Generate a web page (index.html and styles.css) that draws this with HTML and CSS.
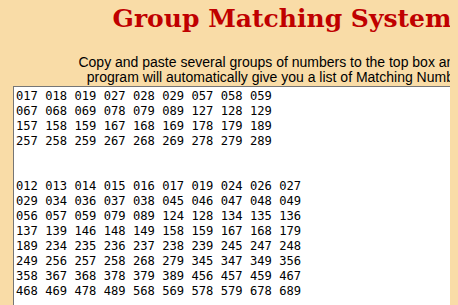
FILE: index.html
```html
<!DOCTYPE html>
<html lang="en">
<head>
    <meta charset="UTF-8">
    <title>Group Matching System</title>
    <link rel="stylesheet" href="styles.css">
</head>
<body>
    <div id="page">
        <h1 class="title">Group Matching System</h1>
        <p class="intro">Copy and paste several groups of numbers to the top box and the<br>
            program will automatically give you a list of Matching Numbers.</p>
        <textarea id="groups" class="numbers" rows="20" readonly>017 018 019 027 028 029 057 058 059
067 068 069 078 079 089 127 128 129
157 158 159 167 168 169 178 179 189
257 258 259 267 268 269 278 279 289


012 013 014 015 016 017 019 024 026 027
029 034 036 037 038 045 046 047 048 049
056 057 059 079 089 124 128 134 135 136
137 139 146 148 149 158 159 167 168 179
189 234 235 236 237 238 239 245 247 248
249 256 257 258 268 279 345 347 349 356
358 367 368 378 379 389 456 457 459 467
468 469 478 489 568 569 578 579 678 689</textarea>
    </div>
</body>
</html>
```
FILE: styles.css
```css
html {
    overflow: hidden;
}
body {
    margin: 0 8px;
    background-color: #f9dca7;
    font-family: "Liberation Sans", Arial, sans-serif;
}
#page {
    width: 548px;
    text-align: center;
}
.title {
    margin: 0;
    padding-top: 2px;
    font-family: "DejaVu Serif", Georgia, serif;
    font-size: 25px;
    line-height: 33px;
    font-weight: bold;
    color: #c00000;
}
.intro {
    margin: 20px 0 1px;
    font-size: 14px;
    line-height: 15px;
    color: #000;
}
.numbers {
    display: block;
    width: 532px;
    height: 320px;
    margin: 0 0 0 5px;
    padding: 2px;
    border: 1px solid #767676;
    background: #fff;
    font-family: "DejaVu Sans Mono", Consolas, monospace;
    font-size: 12.15px;
    line-height: 15px;
    color: #000;
    resize: none;
    text-align: left;
}
```
